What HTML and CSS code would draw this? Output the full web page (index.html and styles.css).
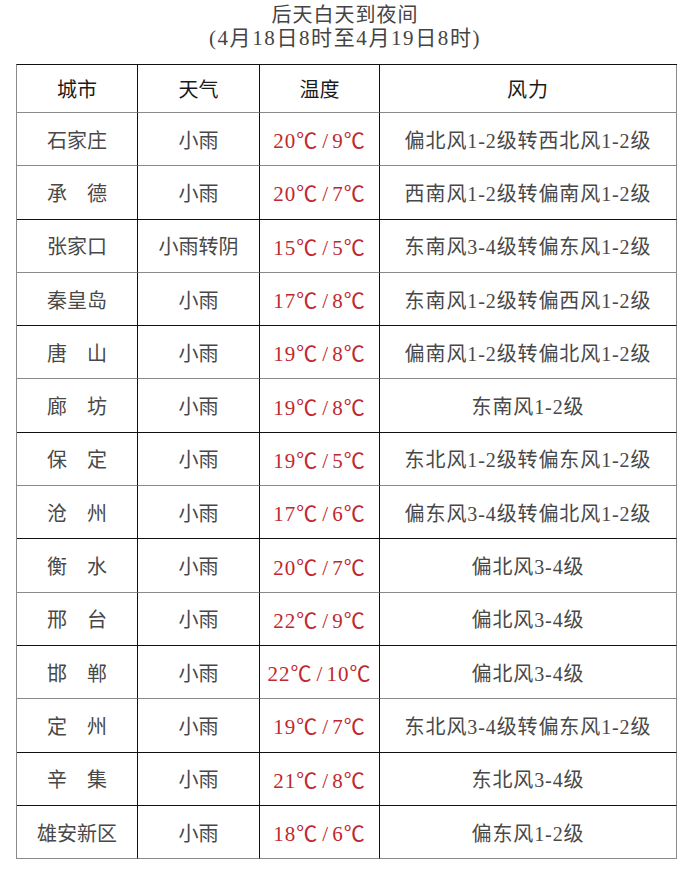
FILE: index.html
```html
<!DOCTYPE html>
<html lang="zh">
<head>
<meta charset="utf-8">
<link rel="stylesheet" href="styles.css">
</head>
<body>
<div class="title">
  <div class="t1">后天白天到夜间</div>
  <div class="t2">(4月18日8时至4月19日8时)</div>
</div>
<table class="wx">
  <colgroup><col class="c1"><col class="c2"><col class="c3"><col class="c4"></colgroup>
  <thead>
    <tr class="hd g"><td>城市</td><td>天气</td><td>温度</td><td class="wd">风力</td></tr>
  </thead>
  <tbody>
    <tr class="g"><td>石家庄</td><td>小雨</td><td class="tp">20<span class="u">℃</span><span class="sl">/</span>9<span class="u">℃</span></td><td class="wd">偏北风1-2级转西北风1-2级</td></tr>
    <tr class="k"><td>承　德</td><td>小雨</td><td class="tp">20<span class="u">℃</span><span class="sl">/</span>7<span class="u">℃</span></td><td class="wd">西南风1-2级转偏南风1-2级</td></tr>
    <tr class="g"><td>张家口</td><td>小雨转阴</td><td class="tp">15<span class="u">℃</span><span class="sl">/</span>5<span class="u">℃</span></td><td class="wd">东南风3-4级转偏东风1-2级</td></tr>
    <tr class="k"><td>秦皇岛</td><td>小雨</td><td class="tp">17<span class="u">℃</span><span class="sl">/</span>8<span class="u">℃</span></td><td class="wd">东南风1-2级转偏西风1-2级</td></tr>
    <tr class="g"><td>唐　山</td><td>小雨</td><td class="tp">19<span class="u">℃</span><span class="sl">/</span>8<span class="u">℃</span></td><td class="wd">偏南风1-2级转偏北风1-2级</td></tr>
    <tr class="k"><td>廊　坊</td><td>小雨</td><td class="tp">19<span class="u">℃</span><span class="sl">/</span>8<span class="u">℃</span></td><td class="wd">东南风1-2级</td></tr>
    <tr class="g"><td>保　定</td><td>小雨</td><td class="tp">19<span class="u">℃</span><span class="sl">/</span>5<span class="u">℃</span></td><td class="wd">东北风1-2级转偏东风1-2级</td></tr>
    <tr class="k"><td>沧　州</td><td>小雨</td><td class="tp">17<span class="u">℃</span><span class="sl">/</span>6<span class="u">℃</span></td><td class="wd">偏东风3-4级转偏北风1-2级</td></tr>
    <tr class="g"><td>衡　水</td><td>小雨</td><td class="tp">20<span class="u">℃</span><span class="sl">/</span>7<span class="u">℃</span></td><td class="wd">偏北风3-4级</td></tr>
    <tr class="k"><td>邢　台</td><td>小雨</td><td class="tp">22<span class="u">℃</span><span class="sl">/</span>9<span class="u">℃</span></td><td class="wd">偏北风3-4级</td></tr>
    <tr class="g"><td>邯　郸</td><td>小雨</td><td class="tp">22<span class="u">℃</span><span class="sl">/</span>10<span class="u">℃</span></td><td class="wd">偏北风3-4级</td></tr>
    <tr class="k"><td>定　州</td><td>小雨</td><td class="tp">19<span class="u">℃</span><span class="sl">/</span>7<span class="u">℃</span></td><td class="wd">东北风3-4级转偏东风1-2级</td></tr>
    <tr class="k"><td>辛　集</td><td>小雨</td><td class="tp">21<span class="u">℃</span><span class="sl">/</span>8<span class="u">℃</span></td><td class="wd">东北风3-4级</td></tr>
    <tr class="g"><td>雄安新区</td><td>小雨</td><td class="tp">18<span class="u">℃</span><span class="sl">/</span>6<span class="u">℃</span></td><td class="wd">偏东风1-2级</td></tr>
  </tbody>
</table>
</body>
</html>
```

FILE: styles.css
```css
html, body {
  margin: 0;
  padding: 0;
  background: #ffffff;
}
body {
  font-family: "Liberation Serif", "Noto Sans CJK SC", serif;
  color: #444;
}
.title {
  padding-top: 4px;
  text-align: center;
  font-size: 20px;
  line-height: 23px;
  color: #444;
}
.t1 {
  letter-spacing: 1px;
}
.t2 {
  font-size: 21px;
  letter-spacing: 1.6px;
}
.wx {
  margin-top: 14px;
  margin-left: 16px;
  width: 661px;
  table-layout: fixed;
  border-collapse: separate;
  border-spacing: 0;
  border-top: 1px solid #111;
  border-left: 1px solid #8a8a8a;
}
.c1 { width: 121px; }
.c2 { width: 122px; }
.c3 { width: 120px; }
.c4 { width: 297px; }
.wx td {
  box-sizing: border-box;
  padding: 0;
  height: 53.3px;
  text-align: center;
  vertical-align: middle;
  font-size: 20px;
  color: #484848;
  border-right: 1px solid #111;
  white-space: nowrap;
}
.wx td:last-child {
  border-right-color: #8a8a8a;
}
.wx tr.hd td {
  height: 48px;
  color: #1a1a1a;
}
.wx tr.g td { border-bottom: 1px solid #8a8a8a; }
.wx tr.k td { border-bottom: 1px solid #111; }
.wx td.tp {
  color: #c0282e;
  font-size: 21px;
  letter-spacing: 1px;
}
.wx td.wd {
  letter-spacing: 0.9px;
}
.u {
  font-family: "Noto Sans CJK SC", sans-serif;
  font-size: 21px;
}
.sl {
  display: inline-block;
  margin: 0 3px 0 4px;
}
```
